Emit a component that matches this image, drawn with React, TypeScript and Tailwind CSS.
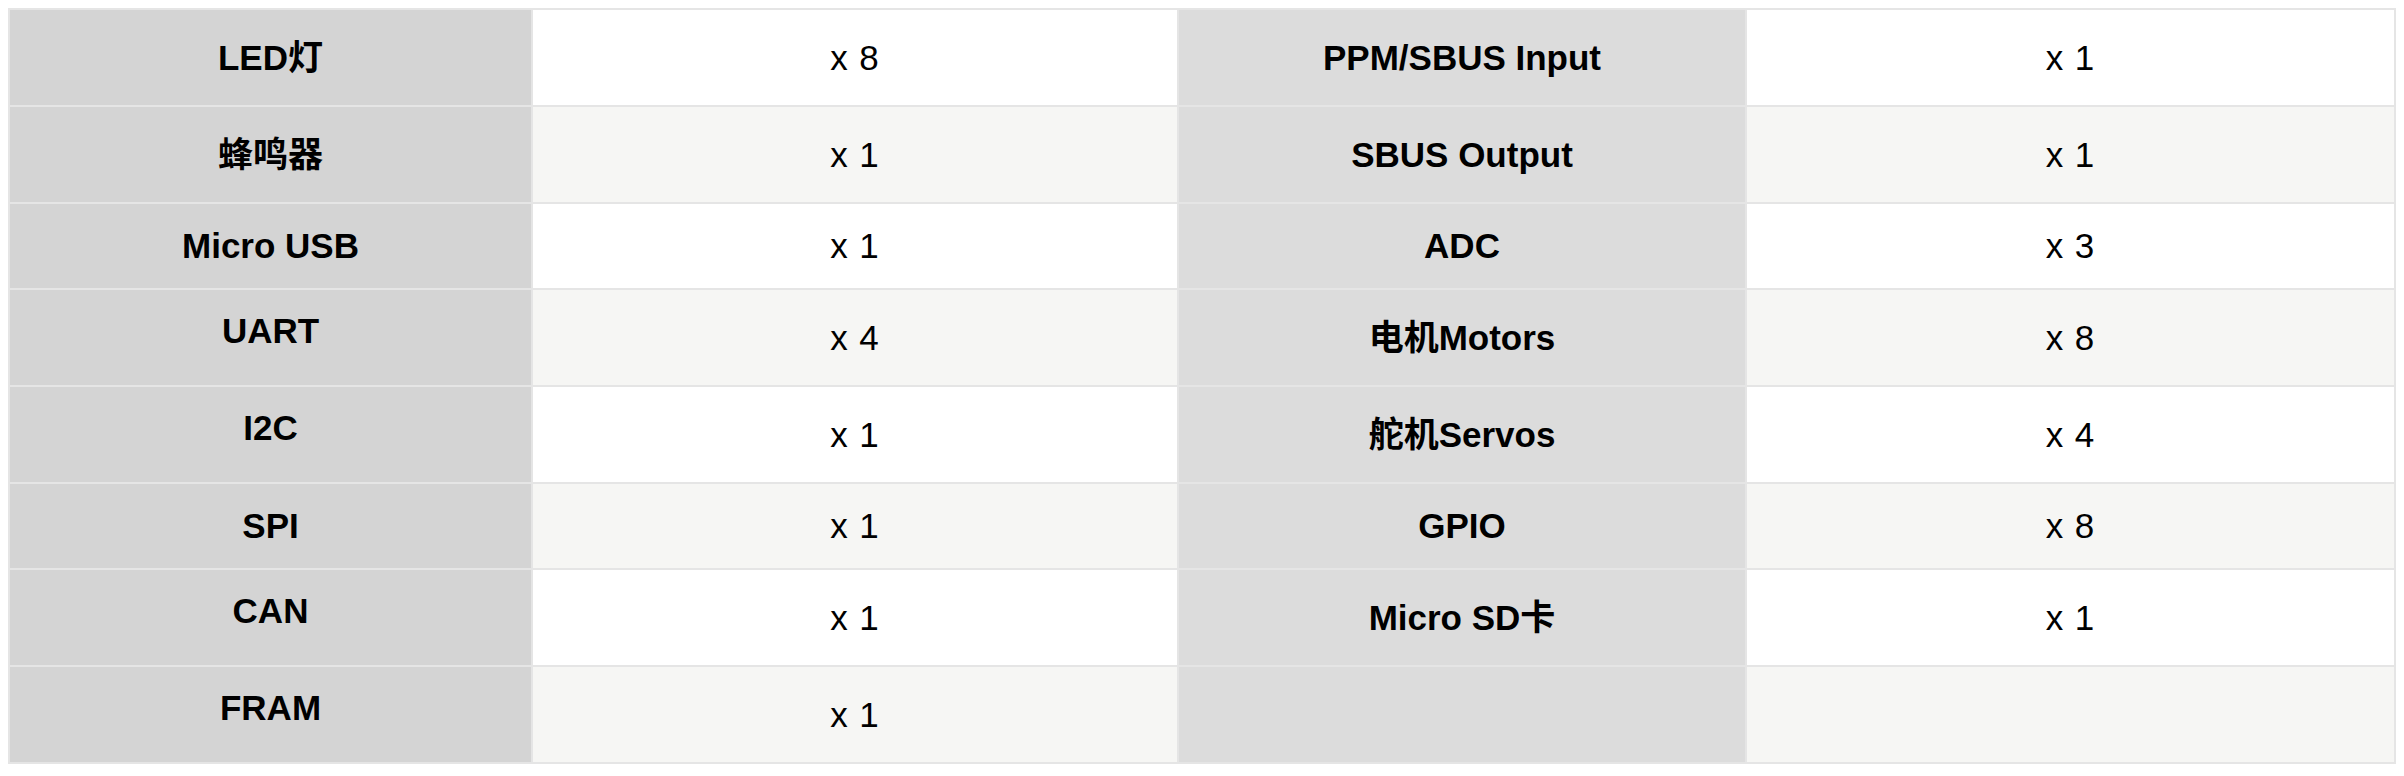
import React from 'react';

type Row = {
  tall: boolean;
  left: string;
  leftQty: string;
  right: string;
  rightQty: string;
  // 纯拉丁文字的标签在高行里贴上
  liftLeft?: boolean;
};

const rows: Row[] = [
  { tall: true, left: 'LED灯', leftQty: 'x 8', right: 'PPM/SBUS Input', rightQty: 'x 1' },
  { tall: true, left: '蜂鸣器', leftQty: 'x 1', right: 'SBUS Output', rightQty: 'x 1' },
  { tall: false, left: 'Micro USB', leftQty: 'x 1', right: 'ADC', rightQty: 'x 3' },
  { tall: true, left: 'UART', leftQty: 'x 4', right: '电机Motors', rightQty: 'x 8', liftLeft: true },
  { tall: true, left: 'I2C', leftQty: 'x 1', right: '舵机Servos', rightQty: 'x 4', liftLeft: true },
  { tall: false, left: 'SPI', leftQty: 'x 1', right: 'GPIO', rightQty: 'x 8' },
  { tall: true, left: 'CAN', leftQty: 'x 1', right: 'Micro SD卡', rightQty: 'x 1', liftLeft: true },
  { tall: true, left: 'FRAM', leftQty: 'x 1', right: '', rightQty: '', liftLeft: true },
];

export default function App() {
  return (
    <div
      className="min-h-screen bg-white pt-[8px] pl-[8px] text-black"
      style={{ fontFamily: '"Liberation Sans", "Noto Sans CJK SC", Arial, sans-serif' }}
    >
      <div className="grid w-[2388px] grid-cols-[521px_644px_566px_647px] gap-[2px] bg-[#e5e5e5] p-[2px] text-[35px] leading-[40px]">
        {rows.map((r, i) => {
          const h = r.tall ? 'h-[95px]' : 'h-[84px]';
          const stripe = i % 2 === 1 ? 'bg-[#f6f6f4]' : 'bg-white';
          return (
            <React.Fragment key={i}>
              <div
                className={`flex ${h} items-center justify-center bg-[#d4d4d4] font-bold ${
                  r.liftLeft ? 'pb-[13px]' : ''
                }`}
              >
                {r.left}
              </div>
              <div className={`flex ${h} items-center justify-center ${stripe} tracking-[1px]`}>
                {r.leftQty}
              </div>
              <div className={`flex ${h} items-center justify-center bg-[#dcdcdc] font-bold`}>
                {r.right}
              </div>
              <div className={`flex ${h} items-center justify-center ${stripe} tracking-[1px]`}>
                {r.rightQty}
              </div>
            </React.Fragment>
          );
        })}
      </div>
    </div>
  );
}
